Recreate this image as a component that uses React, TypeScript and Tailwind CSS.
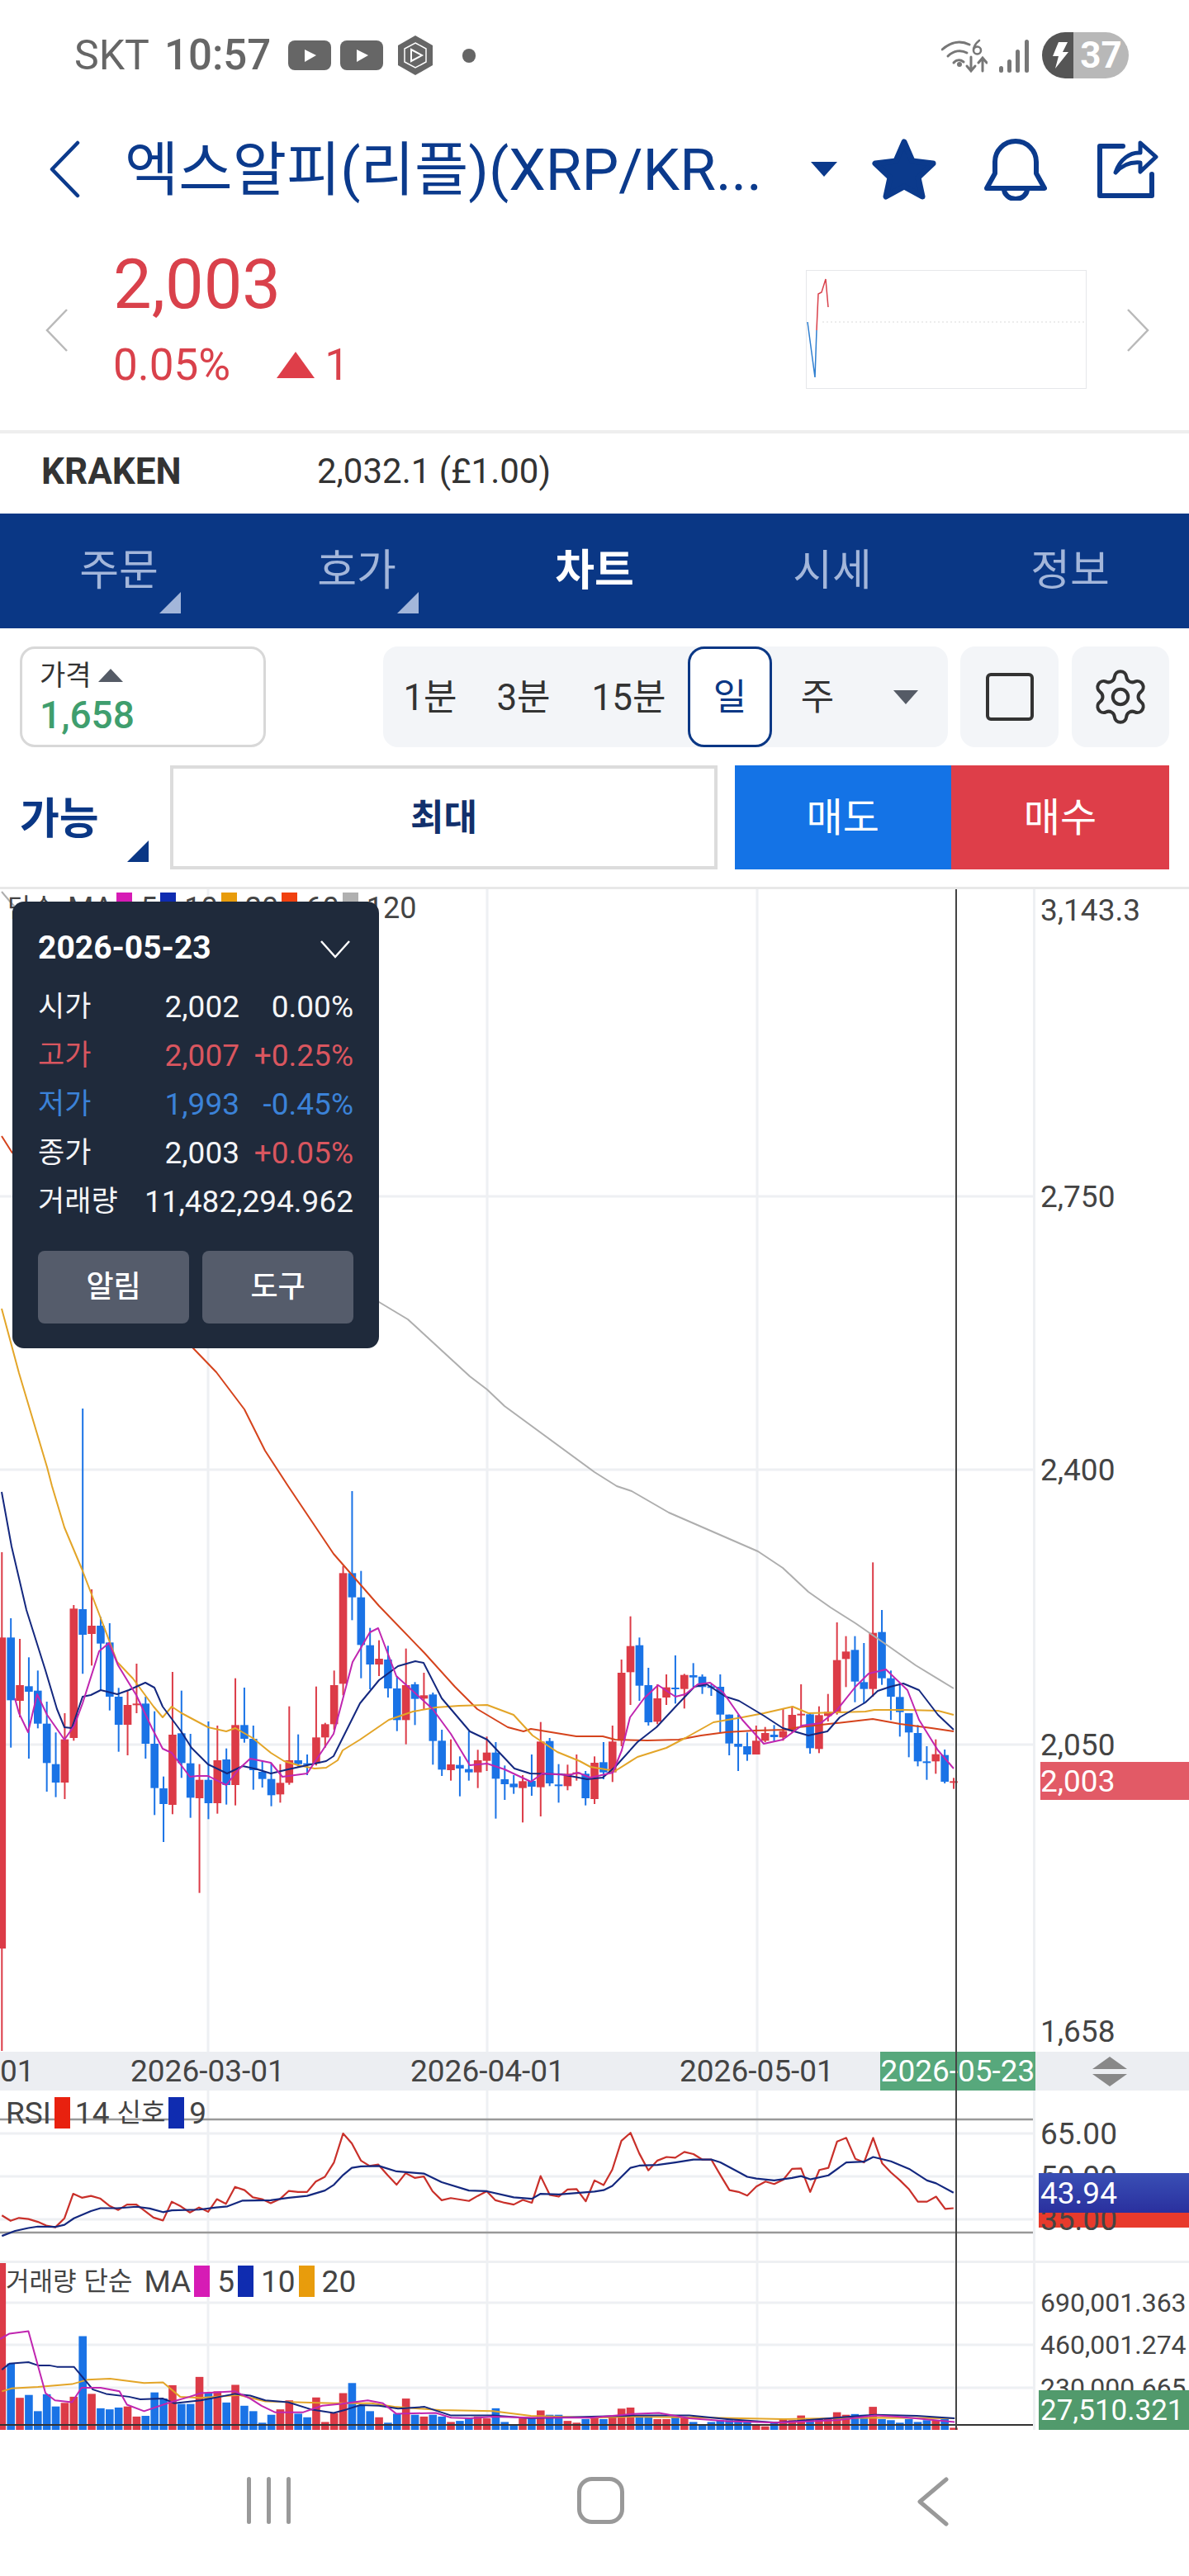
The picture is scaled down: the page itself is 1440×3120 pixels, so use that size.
import {Settings} from "lucide-react";

const NAVY = "#0b3a8c";
const RED = "#dc3b47";
const BLUE = "#1a73e6";
const CANDLE_STEP = 10.875;

// top, bottom, wick top, wick bottom (crop units: page y = 1800 + v / 3), 1 = up candle
const CANDLES: number[][] = [
    [550, 1680, 240, 2052, 1], [550, 778, 480, 950, 0], [723, 780, 555, 840, 1], [727, 747, 622, 990, 0],
    [743, 863, 670, 880, 0], [863, 1006, 783, 1110, 0], [1010, 1077, 895, 1130, 0], [920, 1077, 825, 1137, 1],
    [445, 915, 432, 925, 1], [447, 540, -282, 682, 0], [507, 537, 375, 652, 1], [507, 572, 475, 740, 0],
    [568, 765, 498, 815, 0], [765, 867, 733, 965, 0], [795, 867, 745, 978, 1], [790, 793, 645, 825, 1],
    [790, 936, 765, 990, 0], [936, 1097, 818, 1195, 0], [1098, 1155, 1055, 1293, 0], [903, 1158, 675, 1192, 1],
    [898, 1006, 743, 1060, 0], [1007, 1132, 900, 1205, 0], [1067, 1134, 1010, 1478, 1], [1067, 1152, 855, 1210, 0],
    [996, 1152, 870, 1190, 1], [993, 1086, 953, 1157, 0], [868, 1086, 698, 1160, 1], [868, 918, 732, 932, 0],
    [918, 1032, 870, 1103, 0], [1038, 1064, 997, 1095, 0], [1064, 1123, 1005, 1163, 0], [1078, 1120, 1010, 1150, 1],
    [996, 1078, 800, 1085, 1], [996, 1010, 902, 1020, 0], [1007, 1010, 975, 1050, 0], [913, 1007, 728, 1015, 1],
    [865, 913, 860, 950, 1], [723, 865, 670, 885, 1], [316, 718, 290, 760, 1], [316, 404, 18, 487, 0],
    [404, 577, 308, 698, 0], [578, 648, 515, 738, 0], [627, 648, 560, 690, 1], [630, 735, 580, 768, 0],
    [735, 850, 690, 890, 0], [723, 850, 590, 938, 1], [720, 773, 712, 868, 0], [760, 772, 678, 810, 1],
    [757, 926, 750, 1012, 0], [925, 1030, 885, 1053, 0], [1011, 1032, 920, 1070, 1], [1013, 1026, 982, 1127, 0],
    [1028, 1040, 890, 1070, 0], [996, 1040, 958, 1097, 1], [968, 998, 910, 1035, 1], [968, 1063, 930, 1208, 0],
    [1065, 1083, 1015, 1140, 0], [1081, 1094, 1050, 1118, 0], [1072, 1097, 1050, 1222, 1], [1071, 1092, 975, 1125, 0],
    [928, 1094, 857, 1200, 1], [926, 1080, 915, 1090, 0], [1084, 1087, 1010, 1150, 0], [1045, 1090, 1012, 1105, 1],
    [1040, 1043, 975, 1070, 1], [1045, 1134, 1035, 1160, 0], [1005, 1137, 982, 1155, 1], [1003, 1040, 930, 1065, 0],
    [928, 1040, 870, 1075, 1], [678, 925, 630, 945, 1], [581, 676, 473, 795, 1], [578, 725, 550, 780, 0],
    [723, 858, 660, 870, 0], [771, 856, 720, 865, 1], [731, 768, 684, 795, 1], [732, 736, 615, 790, 0],
    [686, 737, 682, 808, 1], [687, 695, 643, 730, 0], [692, 730, 684, 755, 0], [727, 733, 720, 762, 0],
    [729, 830, 684, 895, 0], [830, 935, 830, 978, 0], [936, 947, 830, 1035, 0], [945, 975, 895, 998, 0],
    [925, 975, 870, 975, 1], [897, 925, 875, 930, 1], [903, 912, 868, 930, 0], [890, 913, 810, 925, 1],
    [831, 890, 800, 895, 1], [827, 830, 720, 875, 1], [829, 952, 825, 972, 0], [832, 955, 800, 970, 1],
    [820, 835, 755, 855, 1], [632, 820, 495, 830, 1], [601, 628, 545, 730, 1], [595, 710, 545, 785, 0],
    [712, 737, 570, 790, 0], [533, 737, 277, 765, 1], [530, 698, 450, 722, 0], [698, 765, 670, 850, 0],
    [766, 821, 715, 910, 0], [825, 895, 825, 985, 0], [897, 1000, 868, 1018, 0], [1000, 1003, 945, 1067, 0],
    [974, 1000, 920, 1045, 1], [977, 1074, 957, 1080, 0], [1072, 1075, 1060, 1100, 1],
];

const MA120 = "2,1080 13,1093 120,1200 459,1577 494,1598 569,1667 590,1683 611,1703 720,1783 747,1800 765,1806 810,1832 918,1879 948,1899 979,1928 1006,1947 1036,1966 1075,1993 1109,2017 1155,2045";
const MA60 = "2,1376 14,1395 234,1633 262,1662 296,1707 321,1757 349,1800 404,1882 459,1945 514,2002 551,2043 578,2070 615,2092 634,2097 643,2094 698,2103 730,2103 745,2107 784,2108 822,2107 849,2102 879,2098 914,2096 952,2095 967,2092 1013,2087 1057,2082 1090,2088 1128,2093 1155,2097";
const MA20 = "2,1585 23,1663 57,1777 63,1800 78,1850 99,1900 122,1960 142,2013 161,2033 186,2067 197,2080 208,2067 220,2075 252,2092 274,2097 285,2093 306,2105 328,2123 344,2133 361,2138 381,2142 395,2141 409,2132 415,2120 436,2107 471,2083 500,2073 528,2068 556,2066 590,2065 622,2077 645,2102 675,2122 702,2133 715,2140 745,2145 772,2128 807,2117 830,2105 864,2086 899,2080 925,2075 960,2067 979,2075 1013,2074 1048,2073 1059,2071 1097,2071 1136,2072 1155,2077";
const MA10 = "2,1807 14,1873 32,1950 55,2023 69,2070 78,2092 87,2093 100,2055 110,2053 122,2047 142,2052 156,2047 176,2038 187,2044 197,2067 220,2098 232,2117 252,2137 275,2148 294,2139 312,2143 328,2148 349,2143 372,2138 395,2133 404,2127 436,2063 459,2035 482,2018 503,2012 513,2014 535,2057 569,2097 590,2107 623,2142 642,2148 680,2149 711,2155 730,2153 745,2140 772,2110 795,2092 822,2063 841,2043 856,2040 879,2055 895,2060 925,2078 948,2093 979,2102 1002,2097 1017,2080 1048,2062 1063,2048 1078,2043 1094,2039 1113,2047 1136,2077 1155,2095";
const MA5 = "18,2057 23,2075 34,2098 45,2052 57,2077 78,2107 90,2090 100,2063 120,2000 132,1990 143,2017 165,2053 184,2093 197,2118 208,2123 230,2152 239,2151 252,2151 274,2162 289,2143 303,2130 328,2135 342,2152 372,2148 404,2100 427,2013 448,1977 458,1972 480,2030 502,2050 524,2070 546,2100 569,2138 590,2136 611,2143 643,2158 657,2148 689,2150 700,2147 715,2153 742,2147 753,2120 763,2080 780,2057 797,2041 818,2055 830,2052 845,2040 860,2038 876,2050 899,2083 925,2112 948,2107 971,2090 994,2087 1013,2072 1036,2043 1052,2027 1073,2022 1099,2047 1113,2083 1136,2120 1155,2142";

// bar tops (crop units: page y = 2440 + v / 2.29)
const VOLUME: number[][] = [
    [683, 1], [968, 0], [1063, 1], [1055, 0], [1100, 0], [1053, 0], [1087, 0], [1077, 1], [1060, 1], [892, 0],
    [1052, 1], [1092, 0], [1095, 0], [1090, 0], [1087, 1], [1115, 1], [1113, 0], [1048, 0], [1065, 0], [1028, 1],
    [1080, 0], [1080, 0], [1005, 1], [1048, 0], [1045, 1], [1076, 0], [1027, 1], [1085, 0], [1100, 0], [1132, 0],
    [1110, 0], [1095, 1], [1070, 1], [1107, 0], [1117, 0], [1062, 1], [1130, 1], [1105, 1], [1050, 1], [1022, 0],
    [1085, 0], [1100, 0], [1117, 1], [1132, 0], [1107, 0], [1065, 1], [1110, 0], [1115, 1], [1110, 0], [1115, 0],
    [1130, 1], [1127, 0], [1120, 0], [1115, 1], [1120, 1], [1092, 0], [1130, 0], [1138, 0], [1120, 1], [1118, 0],
    [1098, 1], [1110, 0], [1110, 0], [1127, 1], [1132, 1], [1122, 0], [1115, 1], [1122, 0], [1115, 1], [1093, 1],
    [1090, 1], [1115, 0], [1115, 0], [1122, 1], [1122, 1], [1115, 0], [1115, 1], [1130, 0], [1138, 0], [1130, 0],
    [1125, 0], [1125, 0], [1125, 0], [1130, 0], [1138, 1], [1142, 1], [1130, 0], [1120, 1], [1125, 1], [1112, 1],
    [1122, 0], [1120, 1], [1120, 1], [1103, 1], [1110, 1], [1108, 0], [1110, 0], [1088, 1], [1122, 0], [1125, 0],
    [1132, 0], [1122, 0], [1130, 0], [1125, 0], [1125, 1], [1122, 0], [1146, 1],
];

// [x, y] pairs read from two crops: left half, then right half offset by 720
const toPage = (left: number[], right: number[], baseY: number, scaleY: number) => {
    const out: string[] = [];
    for (let i = 0; i < left.length; i += 2) out.push(`${left[i] / 2.178},${baseY + left[i + 1] / scaleY}`);
    for (let i = 0; i < right.length; i += 2) out.push(`${720 + right[i] / 2.178},${baseY + right[i + 1] / scaleY}`);
    return out.join(" ");
};

const RSI_LINE = toPage(
    [5, 557, 28, 572, 50, 564, 75, 567, 100, 575, 122, 585, 146, 590, 170, 565, 193, 497, 216, 508, 240, 503, 264, 510, 288, 530, 312, 542, 335, 527, 360, 527, 405, 563, 430, 571, 453, 519, 477, 532, 501, 549, 525, 535, 549, 547, 572, 512, 596, 525, 620, 478, 645, 487, 667, 507, 691, 512, 714, 523, 738, 512, 762, 489, 786, 492, 810, 492, 833, 463, 857, 450, 881, 410, 905, 330, 928, 357, 952, 405, 975, 420, 998, 416, 1022, 445, 1046, 472, 1070, 440, 1094, 453, 1118, 449, 1141, 490, 1165, 515, 1189, 509, 1213, 513, 1237, 517, 1260, 503, 1284, 490, 1307, 515, 1331, 522, 1355, 527, 1379, 514, 1403, 522, 1426, 448, 1450, 500, 1474, 505, 1497, 485, 1521, 484, 1545, 518],
    [0, 460, 24, 473, 47, 430, 71, 350, 95, 328, 118, 385, 142, 432, 166, 405, 190, 395, 213, 397, 237, 381, 261, 387, 284, 402, 308, 402, 332, 445, 356, 487, 380, 492, 403, 502, 427, 477, 451, 463, 474, 470, 498, 458, 521, 428, 545, 427, 569, 492, 593, 431, 617, 425, 640, 352, 664, 342, 688, 400, 711, 410, 735, 342, 759, 413, 782, 438, 806, 460, 830, 485, 853, 519, 877, 519, 901, 505, 925, 539, 947, 537],
    2440, 2.29);
const RSI_SIGNAL = toPage(
    [5, 614, 40, 600, 75, 592, 100, 588, 146, 589, 170, 583, 195, 565, 240, 545, 265, 537, 310, 537, 360, 533, 395, 538, 430, 548, 453, 543, 525, 541, 570, 535, 600, 532, 640, 516, 714, 515, 762, 508, 810, 503, 857, 488, 881, 472, 905, 445, 928, 425, 952, 421, 1000, 420, 1046, 435, 1118, 441, 1165, 465, 1237, 488, 1284, 490, 1355, 507, 1403, 511, 1426, 497, 1474, 499, 1521, 495],
    [0, 491, 24, 487, 47, 475, 95, 425, 118, 419, 166, 417, 213, 410, 261, 402, 308, 402, 332, 410, 380, 437, 403, 450, 427, 455, 474, 460, 521, 453, 545, 448, 569, 457, 617, 446, 664, 410, 711, 408, 735, 395, 782, 407, 830, 428, 877, 460, 901, 468, 947, 494],
    2440, 2.29);
const VOL_MA5 = toPage(
    [0, 900, 25, 885, 75, 878, 120, 1050, 145, 1070, 190, 1075, 215, 1035, 265, 1035, 315, 1045, 335, 1082, 380, 1100, 450, 1075, 500, 1060, 530, 1050, 620, 1045, 660, 1065, 690, 1085, 725, 1103, 800, 1103, 850, 1085, 900, 1080, 970, 1070, 1010, 1078, 1045, 1107, 1150, 1105, 1190, 1118, 1240, 1120, 1300, 1115, 1400, 1118, 1560, 1118],
    [100, 1108, 170, 1105, 250, 1120, 350, 1128, 480, 1132, 640, 1125, 740, 1112, 800, 1115, 950, 1130],
    2440, 2.29);
const VOL_MA10 = toPage(
    [5, 985, 25, 968, 75, 964, 100, 973, 130, 973, 150, 977, 195, 977, 245, 1040, 280, 1052, 340, 1060, 370, 1067, 430, 1065, 460, 1078, 530, 1070, 620, 1052, 660, 1057, 700, 1070, 760, 1075, 820, 1095, 880, 1105, 915, 1095, 950, 1083, 1000, 1085, 1050, 1093, 1120, 1088, 1190, 1112, 1300, 1112, 1400, 1120, 1560, 1115],
    [100, 1112, 250, 1112, 350, 1122, 480, 1132, 640, 1118, 740, 1110, 850, 1113, 950, 1120],
    2440, 2.29);
const VOL_MA20 = toPage(
    [5, 1045, 30, 1037, 100, 1033, 190, 1025, 230, 1013, 290, 1010, 380, 1022, 430, 1020, 475, 1060, 530, 1063, 630, 1055, 700, 1073, 880, 1078, 980, 1078, 1040, 1088, 1160, 1097, 1300, 1100, 1400, 1113, 1560, 1118],
    [100, 1115, 300, 1118, 500, 1122, 740, 1118, 950, 1120],
    2440, 2.29);

const GridV = ({y1, y2}: {y1: number; y2: number}) => (
    <>
        {[252, 590, 917].map(x => <line key={x} x1={x} x2={x} y1={y1} y2={y2} stroke="#eef0f3" strokeWidth={3}/>)}
    </>
);

const GridH = ({ys}: {ys: number[]}) => (
    <>
        {ys.map(y => <line key={y} x1={0} x2={1251} y1={y} y2={y} stroke="#eef0f3" strokeWidth={3}/>)}
    </>
);

const Line = ({points, color, width = 2}: {points: string; color: string; width?: number}) => (
    <polyline points={points} fill="none" stroke={color} strokeWidth={width} strokeLinejoin="round"/>
);

function CandleChart() {
    return (
        <svg viewBox="0 1077 1251 1408" className="h-[1408px] w-[1251px] shrink-0">
            <GridV y1={1077} y2={2485}/>
            <GridH ys={[1449, 1780, 2113]}/>
            {CANDLES.map(([top, bottom, wickTop, wickBottom, up], i) => {
                const x = 2.3 + i * CANDLE_STEP;
                const y = 1800 + top / 3;
                const color = up ? RED : BLUE;
                return (
                    <g key={i}>
                        <line x1={x} x2={x} y1={1800 + wickTop / 3} y2={1800 + wickBottom / 3} stroke={color} strokeWidth={2}/>
                        <rect x={x - 4.8} y={y} width={9.6} height={Math.max(2, (bottom - top) / 3)} fill={color}/>
                    </g>
                );
            })}
            <Line points={MA120} color="#aeaeae"/>
            <Line points={MA60} color="#d5431c"/>
            <Line points={MA20} color="#e3a528"/>
            <Line points={MA10} color="#14287f"/>
            <Line points={MA5} color="#c026b0"/>
        </svg>
    );
}

function RsiChart() {
    return (
        <svg viewBox="0 2532 1251 206" className="h-[206px] w-[1251px] shrink-0">
            <GridV y1={2532} y2={2738}/>
            <GridH ys={[2584, 2636, 2688]}/>
            <line x1={0} x2={1251} y1={2567} y2={2567} stroke="#999" strokeWidth={2.5}/>
            <line x1={0} x2={1251} y1={2704} y2={2704} stroke="#999" strokeWidth={2.5}/>
            <Line points={RSI_LINE} color="#c9302a" width={2.2}/>
            <Line points={RSI_SIGNAL} color="#14287f" width={2.2}/>
        </svg>
    );
}

function VolumeChart() {
    return (
        <svg viewBox="0 2741 1251 202" className="h-[202px] w-[1251px] shrink-0">
            <GridV y1={2741} y2={2943}/>
            <GridH ys={[2789, 2840, 2892]}/>
            {VOLUME.map(([top, up], i) => {
                const y = 2440 + top / 2.29;
                return <rect key={i} x={2.3 + i * CANDLE_STEP - 4.8} y={y} width={9.6} height={2943 - y} fill={up ? RED : BLUE}/>;
            })}
            <Line points={VOL_MA20} color="#e3a528"/>
            <Line points={VOL_MA10} color="#14287f"/>
            <Line points={VOL_MA5} color="#c026b0"/>
            <line x1={0} x2={1251} y1={2937} y2={2937} stroke="#333" strokeWidth={2}/>
        </svg>
    );
}

const Swatch = ({color}: {color: string}) => (
    <span className="mx-[4px] h-[38px] w-[19px] shrink-0" style={{backgroundColor: color}}/>
);

const CornerMark = ({color, className}: {color: string; className: string}) => (
    <svg viewBox="0 0 26 26" className={"absolute h-[26px] w-[26px] " + className}>
        <polygon points="26,0 26,26 0,26" fill={color}/>
    </svg>
);

const VideoIcon = () => (
    <svg viewBox="0 0 52 36" className="h-[36px] w-[52px]">
        <rect width="52" height="36" rx="8" fill="#666"/>
        <polygon points="20,11 34,18 20,26" fill="#fff"/>
    </svg>
);

function StatusBar() {
    return (
        <div className="flex h-[130px] shrink-0 items-start pt-[37px] text-[#666]">
            <span className="ml-[90px] text-[50px] leading-[60px]">SKT</span>
            <span className="ml-[18px] text-[51px] font-medium leading-[60px]">10:57</span>
            <div className="ml-[21px] mt-[12px] flex items-start gap-[11px]">
                <VideoIcon/>
                <VideoIcon/>
            </div>
            <svg viewBox="0 0 42 48" className="ml-[18px] mt-[6px] h-[48px] w-[42px]">
                <polygon points="21,0 42,12 42,36 21,48 0,36 0,12" fill="#666"/>
                <polygon points="21,9 34,16 34,32 21,39 8,32 8,16" fill="none" stroke="#fff" strokeWidth="1.5"/>
                <polygon points="16,17 29,24 16,31" fill="none" stroke="#fff" strokeWidth="2"/>
            </svg>
            <span className="ml-[36px] mt-[22px] h-[17px] w-[16px] rounded-full bg-[#666]"/>
            <svg viewBox="0 0 56 42" className="ml-auto mt-[10px] h-[42px] w-[56px]" fill="none" stroke="#777" strokeWidth="3" strokeLinecap="round">
                <path d="M1 13 C12 3 24 2 34 7"/>
                <path d="M8 21 C15 14 24 13 31 17"/>
                <path d="M15 29 C18 25 23 25 27 28"/>
                <circle cx="22" cy="31" r="1.5" fill="#777"/>
                <path d="M36 22 V38 M31 33 L36 39 L41 33"/>
                <path d="M50 39 V24 M45 29 L50 23 L55 29"/>
                <path d="M46 2 C41 6 39 10 39 14 A4.5 4.5 0 1 0 43.5 9.5 C41 9.5 39.5 11 39 13" strokeWidth="2.6"/>
            </svg>
            <svg viewBox="0 0 38 40" className="ml-[13px] mt-[11px] h-[40px] w-[38px]" fill="#777">
                <rect x="1" y="32" width="5" height="8" rx="2.5"/>
                <rect x="11" y="24" width="5" height="16" rx="2.5"/>
                <rect x="21" y="12" width="5" height="28" rx="2.5"/>
                <rect x="32" y="0" width="5" height="40" rx="2.5"/>
            </svg>
            <div className="ml-[15px] mr-[73px] mt-[2px] flex h-[56px] w-[105px] overflow-hidden rounded-full">
                <div className="flex w-[38px] items-center justify-center bg-[#555]">
                    <svg viewBox="0 0 22 32" className="ml-[6px] h-[32px] w-[22px]"><polygon points="9,0 20,0 14,12 21,12 5,32 9,17 2,17" fill="#fff"/></svg>
                </div>
                <div className="flex flex-1 items-center justify-center bg-[#b8b8b8] text-[44px] font-bold leading-none text-white">37</div>
            </div>
        </div>
    );
}

function Header() {
    return (
        <div className="flex h-[150px] shrink-0 items-center">
            <svg viewBox="0 0 38 70" className="ml-[59px] h-[70px] w-[38px]" fill="none" stroke={NAVY} strokeWidth="4.5" strokeLinecap="round" strokeLinejoin="round">
                <polyline points="35,3 4,35 35,67"/>
            </svg>
            <span className="ml-[54px] w-[831px] whitespace-nowrap text-[71px] leading-none text-[#0b3a8c]">엑스알피(리플)(XRP/KR...</span>
            <svg viewBox="0 0 32 18" className="h-[18px] w-[32px]"><polygon points="0,0 32,0 16,18" fill={NAVY}/></svg>
            <svg viewBox="0 0 78 74" className="ml-[42px] h-[74px] w-[78px]">
                <polygon points="39,4 49,27 74,30 56,47 61,70 39,58 17,70 22,47 4,30 29,27" fill={NAVY} stroke={NAVY} strokeWidth="7" strokeLinejoin="round"/>
            </svg>
            <svg viewBox="0 0 76 75" className="ml-[58px] h-[75px] w-[76px]" fill="none" stroke={NAVY} strokeWidth="6" strokeLinejoin="round" strokeLinecap="round">
                <path d="M13 42 V28 A25 25 0 0 1 63 28 V42 L73 60 H3 Z"/>
                <path d="M24 61 A14 12 0 0 0 52 61"/>
            </svg>
            <svg viewBox="0 0 74 70" className="ml-[61px] h-[70px] w-[74px]" fill="none" stroke={NAVY} strokeLinejoin="round" strokeLinecap="round">
                <path d="M31 7 H3 V67 H66 V41" strokeWidth="6"/>
                <path d="M22 39 C27 23 40 14 52 15 V3 L71 20 L52 38 V27 C40 26 30 30 22 39 Z" strokeWidth="5"/>
            </svg>
        </div>
    );
}

const PagerChevron = ({points, className}: {points: string; className: string}) => (
    <svg viewBox="0 0 28 52" className={"h-[52px] w-[28px] " + className} fill="none" stroke="#b9b9b9" strokeWidth="2.5">
        <polyline points={points}/>
    </svg>
);

function PriceBlock() {
    return (
        <div className="flex h-[241px] shrink-0 items-start">
            <PagerChevron points="26,1 2,26 26,51" className="ml-[55px] mt-[94px]"/>
            <div className="ml-[54px] mt-[27px] flex flex-col text-[#d9414b]">
                <span className="text-[83px] leading-[76px]">2,003</span>
                <div className="mt-[29px] flex items-center text-[53px] leading-[60px]">
                    <span>0.05%</span>
                    <svg viewBox="0 0 46 32" className="ml-[56px] h-[32px] w-[46px]"><polygon points="23,0 46,32 0,32" fill="#de3e49"/></svg>
                    <span className="ml-[12px]">1</span>
                </div>
            </div>
            <svg viewBox="976 327 340 144" className="ml-auto mt-[47px] h-[144px] w-[340px]">
                <rect x="976.5" y="327.5" width="339" height="143" fill="none" stroke="#e6e7ea"/>
                <line x1="996" x2="1315" y1="390" y2="390" stroke="#e8e8e8" strokeWidth="1.5" strokeDasharray="2 3"/>
                <polyline points="978,390 987,457 989,400" fill="none" stroke="#2f7fd0" strokeWidth="1.5"/>
                <polyline points="989,400 991,356 995,354 1000,338 1003,372" fill="none" stroke="#d9414b" strokeWidth="1.5"/>
            </svg>
            <PagerChevron points="2,1 26,26 2,51" className="ml-[48px] mr-[48px] mt-[94px]"/>
        </div>
    );
}

function Tabs() {
    const tabs = ["주문", "호가", "차트", "시세", "정보"];
    return (
        <div className="grid h-[139px] shrink-0 grid-cols-5 bg-[#0a3785]">
            {tabs.map((tab, i) => (
                <div key={tab} className={"relative flex items-center justify-center text-[52px] leading-none " + (i === 2 ? "font-bold text-white" : "text-[#a3b6da]")}>
                    {tab}
                    {i < 2 && <CornerMark color="#a3b6da" className="left-[193px] top-[95px]"/>}
                </div>
            ))}
        </div>
    );
}

function Toolbar() {
    const periods = [
        {label: "1분", width: "w-[114px]"},
        {label: "3분", width: "w-[112px]"},
        {label: "15분", width: "w-[143px]"},
    ];
    return (
        <div className="flex h-[313px] shrink-0 flex-col px-[24px] pt-[22px]">
            <div className="flex h-[122px] items-stretch">
                <div className="flex w-[298px] flex-col justify-center rounded-[18px] border-[3px] border-[#d8d8d8] pl-[21px]">
                    <div className="flex items-center text-[34px] leading-[44px] text-[#333]">
                        가격
                        <svg viewBox="0 0 30 16" className="ml-[8px] h-[16px] w-[30px]"><polygon points="15,0 30,16 0,16" fill="#555b66"/></svg>
                    </div>
                    <span className="text-[46px] font-medium leading-[52px] text-[#3f9e6e]">1,658</span>
                </div>
                <div className="ml-[142px] flex w-[684px] items-stretch rounded-[18px] bg-[#f3f5f8] text-[44px] leading-none text-[#333]">
                    {periods.map(p => (
                        <div key={p.label} className={"flex items-center justify-center pt-[2px] " + p.width}>{p.label}</div>
                    ))}
                    <div className="flex w-[102px] items-center justify-center rounded-[20px] border-[3px] border-[#0a3785] bg-white pt-[2px] text-[#0a3785]">일</div>
                    <div className="flex w-[110px] items-center justify-center pt-[2px]">주</div>
                    <div className="flex flex-1 items-center justify-center">
                        <svg viewBox="0 0 30 17" className="h-[17px] w-[30px]"><polygon points="0,0 30,0 15,17" fill="#555b66"/></svg>
                    </div>
                </div>
                <div className="ml-[15px] flex w-[119px] items-center justify-center rounded-[18px] bg-[#f3f5f8]">
                    <span className="h-[58px] w-[58px] rounded-[6px] border-[4px] border-[#333]"/>
                </div>
                <div className="ml-[16px] flex w-[118px] items-center justify-center rounded-[18px] bg-[#f3f5f8]">
                    <Settings size={74} strokeWidth={1.3} color="#333"/>
                </div>
            </div>
            <div className="mt-[22px] flex h-[126px] items-stretch">
                <div className="relative flex w-[183px] items-center pt-[6px] text-[52px] font-bold leading-none text-[#0a3785]">
                    가능
                    <CornerMark color="#0a3785" className="left-[130px] top-[91px]"/>
                </div>
                <div className="flex w-[664px] items-center justify-center border-4 border-[#dcdcdc] pt-[2px] text-[44px] font-bold leading-none text-[#12306c]">최대</div>
                <div className="ml-[21px] flex w-[263px] items-center justify-center bg-[#1473e6] pt-[2px] text-[48px] leading-none text-white">매도</div>
                <div className="flex w-[265px] items-center justify-center bg-[#de3e49] pt-[2px] text-[48px] leading-none text-white">매수</div>
            </div>
        </div>
    );
}

function QuoteTooltip() {
    const rows = [
        {label: "시가", value: "2,002", pct: "0.00%", color: "text-[#f4f5f7]", pctColor: "text-[#f4f5f7]"},
        {label: "고가", value: "2,007", pct: "+0.25%", color: "text-[#d9565f]", pctColor: "text-[#d9565f]"},
        {label: "저가", value: "1,993", pct: "-0.45%", color: "text-[#3b82d8]", pctColor: "text-[#3b82d8]"},
        {label: "종가", value: "2,003", pct: "+0.05%", color: "text-[#f4f5f7]", pctColor: "text-[#d9565f]"},
    ];
    return (
        <div className="absolute left-[15px] top-[15px] flex w-[444px] flex-col rounded-[14px] bg-[#1f2a3b] px-[31px] pb-[30px]">
            <div className="flex h-[98px] items-start justify-between pt-[34px]">
                <span className="text-[39px] font-bold leading-[44px] text-white">2026-05-23</span>
                <svg viewBox="0 0 36 22" className="mr-[4px] mt-[13px] h-[22px] w-[36px]" fill="none" stroke="#fff" strokeWidth="2.5"><polyline points="1,1 18,20 35,1"/></svg>
            </div>
            {rows.map(r => (
                <div key={r.label} className="flex h-[59px] items-center text-[37px] leading-none">
                    <span className={"flex-1 text-[35px] " + r.color}>{r.label}</span>
                    <span className={r.color}>{r.value}</span>
                    <span className={"w-[138px] text-right " + r.pctColor}>{r.pct}</span>
                </div>
            ))}
            <div className="flex h-[59px] items-center justify-between text-[37px] leading-none text-[#f4f5f7]">
                <span className="text-[35px]">거래량</span>
                <span>11,482,294.962</span>
            </div>
            <div className="mt-[30px] flex gap-[16px] text-[36px] font-medium leading-none text-white">
                <div className="flex h-[88px] flex-1 items-center justify-center rounded-[8px] bg-[#555c6b]">알림</div>
                <div className="flex h-[88px] flex-1 items-center justify-center rounded-[8px] bg-[#555c6b]">도구</div>
            </div>
        </div>
    );
}

const AxisLabel = ({top, size = "text-[37px]", children}: {top: string; size?: string; children: string}) => (
    <span className={"absolute left-[6px] -translate-y-1/2 whitespace-nowrap leading-none text-[#444] " + top + " " + size}>{children}</span>
);

function ChartArea() {
    return (
        <div className="relative flex h-[1866px] shrink-0 flex-col overflow-hidden">
            <div className="relative flex h-[1408px] shrink-0">
                <CandleChart/>
                <div className="relative flex-1 border-l-[3px] border-[#eef0f3]">
                    <AxisLabel top="top-[25px]">3,143.3</AxisLabel>
                    <AxisLabel top="top-[372px]">2,750</AxisLabel>
                    <AxisLabel top="top-[703px]">2,400</AxisLabel>
                    <AxisLabel top="top-[1036px]">2,050</AxisLabel>
                    <AxisLabel top="top-[1383px]">1,658</AxisLabel>
                    <div className="absolute left-[6px] right-0 top-[1057px] flex h-[46px] items-center bg-[#e25a66] text-[37px] leading-none text-white">2,003</div>
                </div>
                <div className="absolute left-[9px] top-[4px] flex items-center text-[36px] leading-none text-[#444]">
                    <span className="text-[32px]">단순</span>
                    <span className="ml-[14px]">MA</span>
                    <Swatch color="#d61bb5"/>
                    <span className="ml-[6px]">5</span>
                    <Swatch color="#0f2cb0"/>
                    <span className="ml-[6px]">10</span>
                    <Swatch color="#e89c0c"/>
                    <span className="ml-[6px]">20</span>
                    <Swatch color="#f0400f"/>
                    <span className="ml-[6px]">60</span>
                    <Swatch color="#b0b0b0"/>
                    <span className="ml-[6px]">120</span>
                </div>
            </div>

            <div className="relative flex h-[47px] shrink-0 items-center bg-[#eceef2] text-[37px] leading-none text-[#444]">
                <span className="absolute left-0">01</span>
                <span className="absolute left-[158px]">2026-03-01</span>
                <span className="absolute left-[497px]">2026-04-01</span>
                <span className="absolute left-[823px]">2026-05-01</span>
                <span className="absolute left-[1066px] flex h-full w-[188px] items-center justify-center bg-[#57a87c] text-white">2026-05-23</span>
                <svg viewBox="0 0 42 36" className="absolute left-[1323px] h-[36px] w-[42px]" fill="#888">
                    <polygon points="21,0 42,15 0,15"/>
                    <polygon points="0,21 42,21 21,36"/>
                </svg>
            </div>

            <div className="relative flex h-[206px] shrink-0">
                <RsiChart/>
                <div className="relative flex-1 border-l-[3px] border-[#eef0f3]">
                    <AxisLabel top="top-[52px]">65.00</AxisLabel>
                    <AxisLabel top="top-[104px]">50.00</AxisLabel>
                    <div className="absolute left-[4px] right-0 top-[148px] h-[18px] bg-[#e83a2c]"/>
                    <AxisLabel top="top-[156px]">35.00</AxisLabel>
                    <div className="absolute left-[4px] right-0 top-[100px] flex h-[48px] items-center bg-gradient-to-b from-[#3a4fb5] to-[#2a2f9e] pl-[2px] text-[37px] leading-none text-white">43.94</div>
                </div>
                <div className="absolute left-[7px] top-[8px] flex items-center text-[37px] leading-none text-[#444]">
                    RSI
                    <Swatch color="#e8210f"/>
                    <span className="ml-[2px]">14</span>
                    <span className="ml-[9px] text-[32px]">신호</span>
                    <Swatch color="#0f2cb0"/>
                    <span className="ml-[2px]">9</span>
                </div>
            </div>

            <div className="relative flex h-[205px] shrink-0 border-t-[3px] border-[#eef0f3]">
                <VolumeChart/>
                <div className="relative flex-1 border-l-[3px] border-[#eef0f3]">
                    <AxisLabel top="top-[48px]" size="text-[32px]">690,001.363</AxisLabel>
                    <AxisLabel top="top-[99px]" size="text-[32px]">460,001.274</AxisLabel>
                    <AxisLabel top="top-[151px]" size="text-[32px]">230,000.665</AxisLabel>
                    <div className="absolute left-[4px] right-0 top-[154px] flex h-[48px] items-center bg-[#519a6c] pl-[2px] text-[35px] leading-none text-white">27,510.321</div>
                </div>
                <div className="absolute left-[7px] top-[3px] flex items-center text-[37px] leading-none text-[#444]">
                    <span className="text-[31px]">거래량</span>
                    <span className="ml-[9px] text-[32px]">단순</span>
                    <span className="ml-[14px]">MA</span>
                    <Swatch color="#d61bb5"/>
                    <span className="ml-[5px]">5</span>
                    <Swatch color="#0f2cb0"/>
                    <span className="ml-[5px]">10</span>
                    <Swatch color="#e89c0c"/>
                    <span className="ml-[5px]">20</span>
                </div>
            </div>

            <div className="absolute bottom-0 left-[1157px] top-0 w-[2px] bg-[#444]"/>
            <QuoteTooltip/>
        </div>
    );
}

function NavBar() {
    return (
        <div className="flex h-[177px] shrink-0 items-start pt-[57px]">
            <div className="ml-[299px] flex h-[57px] gap-[19px]">
                <span className="w-[5px] rounded-full bg-[#999]"/>
                <span className="w-[5px] rounded-full bg-[#999]"/>
                <span className="w-[5px] rounded-full bg-[#999]"/>
            </div>
            <span className="ml-[347px] h-[57px] w-[57px] rounded-[18px] border-[5px] border-[#999]"/>
            <svg viewBox="0 0 38 60" className="ml-[355px] h-[60px] w-[38px]" fill="none" stroke="#999" strokeWidth="5" strokeLinecap="round" strokeLinejoin="round">
                <polyline points="35,3 3,30 35,57"/>
            </svg>
        </div>
    );
}

export default function App() {
    return (
        <div className="flex h-[3120px] w-[1440px] flex-col overflow-hidden bg-white font-['Roboto','Noto_Sans_CJK_KR',sans-serif]">
            <StatusBar/>
            <Header/>
            <PriceBlock/>
            <div className="h-[4px] shrink-0 bg-[#eeeeee]"/>
            <div className="flex h-[97px] shrink-0 items-center pb-[6px] pl-[50px] text-[#333]">
                <span className="w-[334px] text-[44px] font-bold leading-none">KRAKEN</span>
                <span className="text-[42px] leading-none">2,032.1 (£1.00)</span>
            </div>
            <Tabs/>
            <Toolbar/>
            <div className="h-[3px] shrink-0 bg-[#e8e8e8]"/>
            <ChartArea/>
            <NavBar/>
        </div>
    );
}
